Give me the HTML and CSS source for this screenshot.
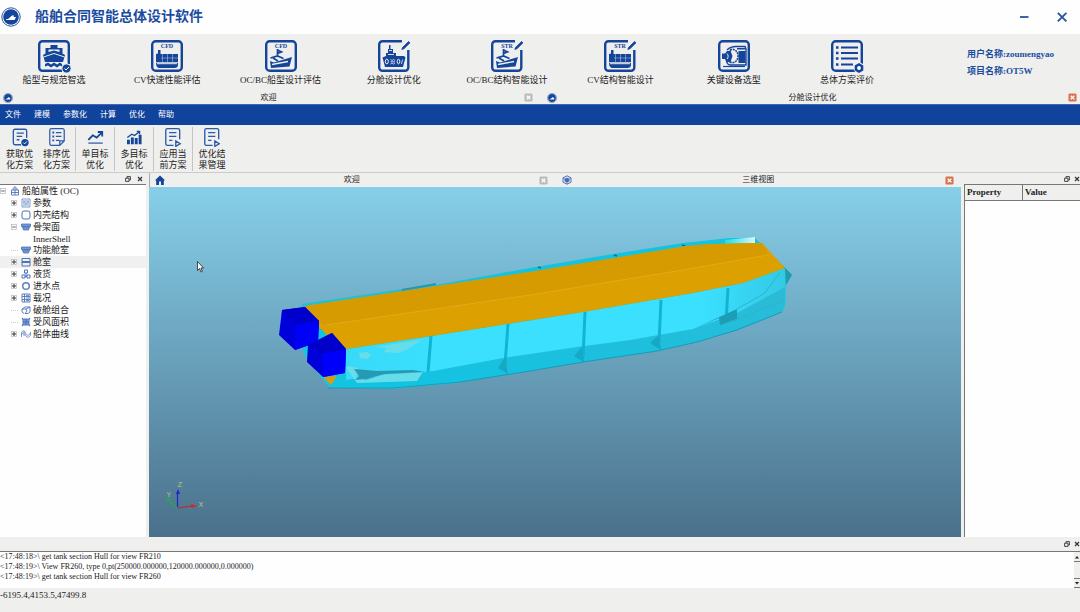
FILE: index.html
```html
<!DOCTYPE html>
<html lang="zh-CN">
<head>
<meta charset="utf-8">
<meta name="viewport" content="width=device-width, initial-scale=1">
<title>船舶合同智能总体设计软件</title>
<link rel="stylesheet" href="styles.css">
</head>
<body>
<svg class="defs" aria-hidden="true">
  <defs>
    <symbol id="logo" viewBox="0 0 20 20">
      <circle cx="10" cy="10" r="9.2" fill="#fff" stroke="#24549f" stroke-width="1"/>
      <circle cx="10" cy="10" r="7.8" fill="#14459a"/>
      <path d="M5 12h2l4-3.500h2l-.5 1.500h2.500l-1.500 3H5.500z" fill="#fff"/>
    </symbol>
    <symbol id="frame" viewBox="0 0 32 32">
      <rect x="1.200" y="1.200" width="29.600" height="29.600" rx="3.500" fill="none" stroke="#14459a" stroke-width="2.400"/>
    </symbol>
    <symbol id="frame-edit" viewBox="0 0 32 32">
      <path d="M24 1.200H4.500A3.300 3.300 0 0 0 1.200 4.500v23a3.300 3.300 0 0 0 3.300 3.300h22.500a3.300 3.300 0 0 0 3.300-3.300V10" fill="none" stroke="#14459a" stroke-width="2.400"/>
      <path d="M24.500 7.500L30.500 1.500l1.500 1.300-6 5.900-2.200.7z" fill="#14459a" stroke="#14459a" stroke-width=".8"/>
    </symbol>
    <symbol id="container-ship" viewBox="0 0 32 32">
      <path d="M5 23h22v2c0 2-1.500 3-3.500 3H8.500C6 28 5 25.500 5 23z" fill="#14459a"/>
      <path d="M5 22.300V14l2-.5V10h2.500v4H27v8.300z" fill="#14459a"/>
      <path d="M11.500 14v8M16.500 14v8M21.500 14v8M10 18h17" stroke="#efefee" stroke-width=".4"/>
      <path d="M6 23.700h20" stroke="#efefee" stroke-width="1"/>
    </symbol>
    <symbol id="bulk-ship" viewBox="0 0 32 32">
      <path d="M5 21l4 1.500 18-5.500-2.500 9.500L6 28z" fill="#14459a"/>
      <path d="M7 24.500l16-3" stroke="#efefee" stroke-width="1.300"/>
      <path d="M5.500 18l7-2 6 2.500M12.500 9v7M12.500 10l4 2-4 1.500M8 18l5 3" fill="none" stroke="#14459a" stroke-width="1.700"/>
    </symbol>
    <symbol id="close" viewBox="0 0 10 10">
      <rect x=".5" y=".5" width="9" height="9" rx="1.500" fill="currentColor"/>
      <path d="M3 3l4 4M7 3L3 7" stroke="#fff" stroke-width="1.400"/>
    </symbol>
    <symbol id="float" viewBox="0 0 6 6">
      <path d="M2 2V.6h3.400V4H4M.6 2.200H4v3.200H.6z" fill="none" stroke="#333" stroke-width=".9"/>
    </symbol>
    <symbol id="dismiss" viewBox="0 0 6 6">
      <path d="M1 1l4 4M5 1L1 5" stroke="#333" stroke-width="1.200"/>
    </symbol>
    <symbol id="plus" viewBox="0 0 6 6">
      <rect x=".5" y=".5" width="5" height="5" fill="#fff" stroke="#aaa" stroke-width=".6"/>
      <path d="M1 3h4M3 1v4" stroke="#333" stroke-width="1"/>
    </symbol>
    <symbol id="minus" viewBox="0 0 6 6">
      <rect x=".5" y=".5" width="5" height="5" fill="#fff" stroke="#aaa" stroke-width=".6"/>
      <path d="M1.200 3h3.600" stroke="#555" stroke-width=".9"/>
    </symbol>
    <symbol id="bulkhead" viewBox="0 0 10 10">
      <path d="M.5 2h9v2.500h-9zM1.500 5h7L7.500 8h-5z" fill="#7798d2" stroke="#3c66b4" stroke-width=".7"/>
    </symbol>
  </defs>
</svg>

<div class="app">
  <header class="titlebar">
    <svg class="titlebar-logo"><use href="#logo"/></svg>
    <h1 class="title">船舶合同智能总体设计软件</h1>
    <div class="window-controls">
      <button class="window-button" aria-label="最小化"><svg viewBox="0 0 12 12"><path d="M2 6h8.500" stroke="#24549f" stroke-width="1.800"/></svg></button>
      <button class="window-button" aria-label="关闭"><svg viewBox="0 0 12 12"><path d="M1.800 1.800l8.600 8.600M10.400 1.800l-8.600 8.600" stroke="#24549f" stroke-width="1.800"/></svg></button>
    </div>
  </header>

  <section class="ribbon">
    <nav class="modules">
      <button class="module">
        <svg viewBox="0 0 32 32">
          <path d="M24 30.800H4.500a3.300 3.300 0 0 1-3.300-3.300v-23a3.300 3.300 0 0 1 3.300-3.300h23a3.300 3.300 0 0 1 3.300 3.300V24" fill="none" stroke="#14459a" stroke-width="2.400"/>
          <path d="M12.500 5h7v3h5v5.500l2.500 1.500-2 7H7l-2-7 2.500-1.500V8h5z" fill="#14459a"/>
          <path d="M10.500 9.500h11v2.500L16 10.500 10.500 12z" fill="#efefee"/>
          <path d="M5.500 17L16 13.500 26.500 17" fill="none" stroke="#efefee" stroke-width="1"/>
          <path d="M7 24l3-1.500 3 2 3-2 3 2 3-2 2 1.500v2.500l-2-1-3 2-3-2-3 2-3-2-3 1z" fill="#14459a"/>
          <circle cx="28.500" cy="28.500" r="4.600" fill="#14459a" stroke="#efefee" stroke-width="1"/>
          <path d="M26.500 28.500l1.500 1.500 3-3" fill="none" stroke="#fff" stroke-width="1"/>
        </svg>
        <span>船型与规范智选</span>
      </button>
      <button class="module">
        <svg viewBox="0 0 32 32"><use href="#frame"/><use href="#container-ship"/><text class="badge" x="16" y="8">CFD</text></svg>
        <span>CV快速性能评估</span>
      </button>
      <button class="module">
        <svg viewBox="0 0 32 32"><use href="#frame"/><use href="#bulk-ship"/><text class="badge" x="16" y="8">CFD</text></svg>
        <span>OC/BC船型设计评估</span>
      </button>
      <button class="module">
        <svg viewBox="0 0 32 32">
          <use href="#frame-edit"/>
          <path d="M4.500 17.500L8 16v-3h2V9h1V5h1.500v4H15v4h3v3h8l1.500 1.500L25 27H7z" fill="#14459a"/>
          <path d="M11 10.500h3M10 14.500h6" stroke="#efefee" stroke-width=".9"/>
          <ellipse cx="8.800" cy="21.500" rx="1.500" ry="2.300" fill="none" stroke="#efefee" stroke-width="1"/>
          <ellipse cx="20.500" cy="21.500" rx="1.300" ry="2.300" fill="none" stroke="#efefee" stroke-width="1"/>
          <path d="M12.500 19.500l1.500 1 1.500-1 1.500 1M12.500 21.800h4.500M12.500 24l1.500-1 1.500 1 1.500-1M24.500 19.500l-1 4.500" fill="none" stroke="#efefee" stroke-width=".8"/>
        </svg>
        <span>分舱设计优化</span>
      </button>
      <button class="module">
        <svg viewBox="0 0 32 32"><use href="#frame-edit"/><use href="#bulk-ship"/><text class="badge" x="16" y="8">STR</text></svg>
        <span>OC/BC结构智能设计</span>
      </button>
      <button class="module">
        <svg viewBox="0 0 32 32"><use href="#frame-edit"/><use href="#container-ship"/><text class="badge" x="16" y="8">STR</text></svg>
        <span>CV结构智能设计</span>
      </button>
      <button class="module">
        <svg viewBox="0 0 32 32">
          <use href="#frame"/>
          <path d="M9 10c3-3 6-3.500 9-3.500h9l1 2.500v16H12c-3 0-4-4-4-9" fill="none" stroke="#14459a" stroke-width="1.400"/>
          <path d="M12 10c4-2 8 1 8 6s-4 8-8 6z" fill="#efefee" stroke="#14459a" stroke-width="1.600" stroke-dasharray="2 .8"/>
          <path d="M4 13.500h3l2-2.500h3.500l2 5-2 6H9l-2-3H4z" fill="#14459a"/>
          <path d="M9 13.500c1.500 1.500 1.500 4 0 5.500" fill="none" stroke="#efefee" stroke-width="1"/>
          <path d="M20.500 11h7v12h-7zM19 8h8v1.500h-8z" fill="#14459a"/>
          <path d="M5 26.500h22" stroke="#14459a" stroke-width="1.200"/>
        </svg>
        <span>关键设备选型</span>
      </button>
      <button class="module">
        <svg viewBox="0 0 32 32">
          <use href="#frame"/>
          <path d="M5 7.500h2.500M5 13h2.500M5 18.500h2.500M5 24.500h2.500" stroke="#14459a" stroke-width="2.500"/>
          <path d="M10 7.500h17M10 13h17M10 18.500h17M10 24.500h12" stroke="#14459a" stroke-width="1.900"/>
          <circle cx="28" cy="28" r="5.500" fill="#efefee"/>
          <path d="M28 23l4.300 2.500v5L28 33l-4.300-2.500v-5z" fill="#14459a"/>
          <circle cx="28" cy="28" r="1.900" fill="#fff"/>
        </svg>
        <span>总体方案评价</span>
      </button>
    </nav>
    <div class="account">
      <div>用户名称:zoumengyao</div>
      <div>项目名称:OT5W</div>
    </div>
  </section>

  <div class="tabs">
    <div class="tab">
      <svg class="tab-icon"><use href="#logo"/></svg>
      <span class="tab-label">欢迎</span>
      <button class="tab-close" aria-label="关闭欢迎"><svg><use href="#close"/></svg></button>
    </div>
    <div class="tab">
      <svg class="tab-icon"><use href="#logo"/></svg>
      <span class="tab-label">分舱设计优化</span>
      <button class="tab-close active" aria-label="关闭分舱设计优化"><svg><use href="#close"/></svg></button>
    </div>
  </div>

  <nav class="menubar">
    <button>文件</button><button>建模</button><button>参数化</button><button>计算</button><button>优化</button><button>帮助</button>
  </nav>

  <div class="toolbar">
    <button class="tool">
      <svg viewBox="0 0 18 18"><path d="M10 16H4.500a1.500 1.500 0 0 1-1.500-1.500v-11A1.500 1.500 0 0 1 4.500 2h9A1.500 1.500 0 0 1 15 3.500V10M6 5.500h6.500M6 8.500h5M6 11.500h2.500" fill="none" stroke="#2b58a8" stroke-width="1.200"/><circle cx="13.500" cy="14" r="3.300" fill="#14459a"/><path d="M12 14l1.200 1.200 2-2.200" fill="none" stroke="#fff" stroke-width=".8"/></svg>
      <span>获取优<br>化方案</span>
    </button>
    <button class="tool">
      <svg viewBox="0 0 18 18"><path d="M11.500 16.500H4A1.500 1.500 0 0 1 2.500 15V3A1.500 1.500 0 0 1 4 1.500h10A1.500 1.500 0 0 1 15.500 3v9.500zM11.500 16.500v-4h4M8 5h5M8 8.500h5M8 12h3" fill="none" stroke="#2b58a8" stroke-width="1.100"/><path d="M4.800 5h1.700M4.800 8.500h1.700M4.800 12h1.700" stroke="#2b58a8" stroke-width="1.700"/></svg>
      <span>排序优<br>化方案</span>
    </button>
    <button class="tool divided">
      <svg viewBox="0 0 18 18"><path d="M3 14.500h13" stroke="#5578b8" stroke-width="1.400"/><path d="M3 11.500L7 7.500l3.500 2L15 5M11.500 4.500h4v4" fill="none" stroke="#14459a" stroke-width="1.600"/></svg>
      <span>单目标<br>优化</span>
    </button>
    <button class="tool divided">
      <svg viewBox="0 0 18 18"><path d="M4 15.500v-4M7.500 15.500v-6M11 15.500V10M14.500 15.500V7" stroke="#14459a" stroke-width="2.600"/><path d="M3 9.500L7 6.500l2.500 1.200L14 4M11.500 4H14v2.500" fill="none" stroke="#14459a" stroke-width="1.200"/></svg>
      <span>多目标<br>优化</span>
    </button>
    <button class="tool divided">
      <svg viewBox="0 0 18 18"><path d="M9.500 16.500H4A1.500 1.500 0 0 1 2.500 15V3A1.500 1.500 0 0 1 4 1.500h9.500A1.500 1.500 0 0 1 15 3v8M5.500 5h6.500M5.500 8.500h6.500M5.500 12h3M11.500 12.500v5l4-2.500z" fill="none" stroke="#2b58a8" stroke-width="1.200"/></svg>
      <span>应用当<br>前方案</span>
    </button>
    <button class="tool divided">
      <svg viewBox="0 0 18 18"><path d="M9.500 16.500H4A1.500 1.500 0 0 1 2.500 15V3A1.500 1.500 0 0 1 4 1.500h9.500A1.500 1.500 0 0 1 15 3v8M5.500 5h6.500M5.500 8.500h6.500M5.500 12h3M11.500 12.500v5l4-2.500z" fill="none" stroke="#2b58a8" stroke-width="1.200"/></svg>
      <span>优化结<br>果管理</span>
    </button>
  </div>

  <main class="workspace">
    <aside class="tree-panel">
      <div class="dock-head">
        <button aria-label="浮动"><svg><use href="#float"/></svg></button>
        <button aria-label="关闭"><svg><use href="#dismiss"/></svg></button>
      </div>
      <ul class="tree">
        <li>
          <div class="row"><button class="toggle" aria-label="折叠"><svg><use href="#minus"/></svg></button><svg class="node-icon" viewBox="0 0 10 10"><path d="M1.500 4h7v5h-7zM3 4c0-4 4-4 4 0M1.500 6.500h7M5 1v8" fill="none" stroke="#4d74bb" stroke-width=".9"/></svg><span>船舶属性 (OC)</span></div>
          <ul class="branch">
            <li><div class="row"><button class="toggle" aria-label="展开"><svg><use href="#plus"/></svg></button><svg class="node-icon" viewBox="0 0 10 10"><path d="M1 1h8v8H1zM3 2v6M5 2v6M7 2v6M2.300 4h1.500M4.300 6h1.500M6.300 4h1.500" fill="none" stroke="#4d74bb" stroke-width=".7"/></svg><span>参数</span></div></li>
            <li><div class="row"><button class="toggle" aria-label="展开"><svg><use href="#plus"/></svg></button><svg class="node-icon" viewBox="0 0 10 10"><rect x="1" y="1" width="8" height="8" rx="2" fill="none" stroke="#4d74bb"/></svg><span>内壳结构</span></div></li>
            <li>
              <div class="row"><button class="toggle" aria-label="折叠"><svg><use href="#minus"/></svg></button><svg class="node-icon"><use href="#bulkhead"/></svg><span>骨架面</span></div>
              <ul class="leaves"><li><div class="row">InnerShell</div></li></ul>
            </li>
            <li><div class="row"><span class="twig"></span><svg class="node-icon"><use href="#bulkhead"/></svg><span>功能舱室</span></div></li>
            <li><div class="row hovered"><button class="toggle" aria-label="展开"><svg><use href="#plus"/></svg></button><svg class="node-icon" viewBox="0 0 10 10"><path d="M1 1.500h8v7.500H1zM1 4.500h8M1 5.500h8" fill="none" stroke="#4d74bb" stroke-width="1"/></svg><span>舱室</span></div></li>
            <li><div class="row"><button class="toggle" aria-label="展开"><svg><use href="#plus"/></svg></button><svg class="node-icon" viewBox="0 0 10 10"><path d="M3.500 1h3v3h-3zM1 6h3v3H1zM6 6h3v3H6zM5 4v3M4 7.500h2" fill="none" stroke="#4d74bb"/></svg><span>液货</span></div></li>
            <li><div class="row"><button class="toggle" aria-label="展开"><svg><use href="#plus"/></svg></button><svg class="node-icon" viewBox="0 0 10 10"><circle cx="5" cy="5" r="3.300" fill="none" stroke="#5b80c4" stroke-width="1.500"/></svg><span>进水点</span></div></li>
            <li><div class="row"><button class="toggle" aria-label="展开"><svg><use href="#plus"/></svg></button><svg class="node-icon" viewBox="0 0 10 10"><path d="M1 1h8v8H1zM1 3.500h8M1 6.500h8M3.500 1v8M5 2.300h3M5 5h3M5 7.700h3" fill="none" stroke="#4d74bb" stroke-width=".9"/></svg><span>载况</span></div></li>
            <li><div class="row"><span class="twig"></span><svg class="node-icon" viewBox="0 0 10 10"><path d="M1 4l3-2h5v5L7 8.500H4M1 4v3l2 1.500M1 4h4l1 2-2 2.500M9 2L5 4" fill="none" stroke="#4d74bb" stroke-width=".9"/></svg><span>破舱组合</span></div></li>
            <li><div class="row"><span class="twig"></span><svg class="node-icon" viewBox="0 0 10 10"><path d="M1 1l1.500 1h5L9 1 8 3v4l1 2-1.500-1h-5L1 9l1-2V3z" fill="#7798d2" stroke="#4d74bb" stroke-width=".9"/><path d="M2 5h6M5 2v6" stroke="#3c66b4" stroke-width=".7"/></svg><span>受风面积</span></div></li>
            <li><div class="row"><button class="toggle" aria-label="展开"><svg><use href="#plus"/></svg></button><svg class="node-icon" viewBox="0 0 10 10"><path d="M.5 8V4c1-3 3-3 4 0s3 3 5 0M.5 6c1-3 3-2 4 .5s4 2 5-.5V3M3 2v5" fill="none" stroke="#5b80c4" stroke-width=".8"/></svg><span>船体曲线</span></div></li>
          </ul>
        </li>
      </ul>
    </aside>

    <section class="viewer">
      <div class="view-tabs">
        <div class="tab">
          <svg class="tab-icon" viewBox="0 0 10 10"><path d="M0 5.200L5 .5l5 4.700-1.200.3V10H6V6.500H4V10H1.200V5.500z" fill="#14459a"/></svg>
          <span class="tab-label">欢迎</span>
          <button class="tab-close" aria-label="关闭欢迎"><svg><use href="#close"/></svg></button>
        </div>
        <div class="tab">
          <svg class="tab-icon" viewBox="0 0 10 10"><path d="M5 .8l4 2v4.400l-4 2-4-2V2.800z" fill="#dbe4f4" stroke="#4668b0" stroke-width=".9"/><path d="M5 2.800l2.400 1.100v2.400L5 7.400 2.600 6.300V3.900z" fill="#4668b0"/><path d="M1 2.800l4 2 4-2M5 4.800v4.400" fill="none" stroke="#4668b0" stroke-width=".6"/></svg>
          <span class="tab-label">三维视图</span>
          <button class="tab-close active" aria-label="关闭三维视图"><svg><use href="#close"/></svg></button>
        </div>
      </div>
      <div class="scene">
        <svg viewBox="149 187 812 350" role="img" aria-label="船体三维模型">
          <defs>
            <linearGradient id="bow" x1="0" x2="1"><stop offset="0" stop-color="#1bdcf2"/><stop offset="1" stop-color="#d8f7f6"/></linearGradient>
            <linearGradient id="side" gradientUnits="userSpaceOnUse" x1="345" x2="790" y1="0" y2="0"><stop offset="0" stop-color="#37d9f6"/><stop offset=".2" stop-color="#3be0ff"/><stop offset=".8" stop-color="#3be0ff"/><stop offset="1" stop-color="#32c8e4"/></linearGradient>
            <linearGradient id="bilge" gradientUnits="userSpaceOnUse" x1="0" x2="0" y1="300" y2="388"><stop offset="0" stop-color="#2bbbd7"/><stop offset="1" stop-color="#12c3e2"/></linearGradient>
          </defs>
          <path d="M302 305L436 285 530 268 613 254 683 243 730 238 755 238 792 275 786 285 785 305 782 312 737 330 697 342 657 351 583 362 530 371 460 382 393 388 330 387 303 350z" fill="#14c3df"/>
          <path d="M346 349L432 336 583 312 693 293 743 283 785 268 786 305 693 335 583 350 428 372 346 380z" fill="url(#side)"/>
          <path d="M428 372L503 358 577 347 630 340 693 329 737 313 785 287 785 305 782 312 737 330 697 342 657 351 583 362 530 371 460 382 393 388 330 387 346 380z" fill="url(#bilge)"/>
          <path d="M302 305L436 285" stroke="#24bfd2" stroke-width="2"/>
          <path d="M402 290L436 284" stroke="#2796b0" stroke-width="2"/>
          <path d="M725 240L755 237 755 243 725 244z" fill="url(#bow)"/>
          <path d="M755 238L792 275 785 269z" fill="#249bb0"/>
          <path d="M785 268L792 275 786 285z" fill="#2699ad"/>
          <path d="M538 267l3 1M614 255l3 1M682 245l3 1" stroke="#126c82" stroke-width="1.500"/>
          <path d="M305 306L530 272 687 246 712 244 762 243 785 268 743 283 693 293 583 312 507 324 432 336 346 349 330 338 318 326z" fill="#dca000"/>
          <path d="M305 306L530 272 687 246 712 244 762 243 768 255 683 270 530 295 326 325 318 322z" fill="#d69b00"/>
          <path d="M326 325L530 295 683 270 768 255" fill="none" stroke="#e8b428" stroke-width=".6"/>
          <path d="M431 336l-3 36M508 324l-3 41M585 312l-2 46M661 300l-2 43M728 288l-2 34" stroke="#11b4d2" stroke-width="3"/>
          <path d="M505 357l3 17-10-6M582 347l2 15-10-6M659 335l2 15-11-7" fill="#16a8c5"/>
          <path d="M693 329L737 309 737 320 720 325 719 318z" fill="#1d9eb7"/>
          <path d="M737 309L765 293 780 272M719 326L740 318 785 300" fill="none" stroke="#2cb4cd" stroke-width="1"/>
          <path d="M374 347l47-7-7 5-8 5-8 3-14-1 3-4zM359 353l8-1 4 3-3 4-8-1zM346 368l2-2 10 2-2 9 10 3 17-5 40-3-6 9-60 2z" fill="#67ddea"/>
          <path d="M354 369l23 2 36-1 12 2-40 2-20 5-10 1 4-4z" fill="#2799b2"/>
          <path d="M303 350L313 366 330 387 393 388 460 382" fill="none" stroke="#14c9e3" stroke-width="1.500"/>
          <path d="M328 388L393 388 460 382 530 371 583 362 657 351 697 342 737 330 782 312" fill="none" stroke="#0f8ea9" stroke-width=".7"/>
          <path d="M323 377L337 376 331 385z" fill="#dc9b10"/>
          <path d="M282 310L305 307 319 321 318 342 295 350 279 335z" fill="#0000dc"/>
          <path d="M282 310L305 307 319 321 296 325z" fill="#0000cc"/>
          <path d="M296 325L319 321 318 342 295 350z" fill="#0000f8"/>
          <path d="M308 345L332 333 346 349 345 373 323 377 307 362z" fill="#0000d8"/>
          <path d="M308 345L332 333 346 349 322 354z" fill="#0000ca"/>
          <path d="M322 354L346 349 345 373 323 377z" fill="#0000fa"/>
          <path d="M177.500 508V492" stroke="#1b25d0" stroke-width="1.200"/><path d="M176 494l2-5 2 5z" fill="#1b25d0"/>
          <path d="M178 508l14-2" stroke="#c8232b" stroke-width="1.200"/><path d="M191 504l6 2-5.500 2z" fill="#d8232b"/>
          <path d="M177.500 508l-8-7" stroke="#1fae45" stroke-width="1.300"/><path d="M166 498l5 1-3 3z" fill="#1fae45"/>
          <text class="axis" x="180" y="487">Z</text><text class="axis" x="169" y="497">Y</text><text class="axis" x="201" y="507">X</text>
          <path d="M197.500 261.500v9l2-2 1.500 3.500 1.400-.6-1.500-3.400h2.600z" fill="#fff" stroke="#222" stroke-width=".8"/>
        </svg>
      </div>
    </section>

    <aside class="props-panel">
      <div class="dock-head flush">
        <button aria-label="浮动"><svg><use href="#float"/></svg></button>
        <button aria-label="关闭"><svg><use href="#dismiss"/></svg></button>
      </div>
      <div class="props-body">
        <table class="props">
          <thead><tr><th scope="col">Property</th><th scope="col">Value</th></tr></thead>
        </table>
      </div>
    </aside>
  </main>

  <section class="log-panel">
    <div class="dock-head flush">
      <button aria-label="浮动"><svg><use href="#float"/></svg></button>
      <button aria-label="关闭"><svg><use href="#dismiss"/></svg></button>
    </div>
    <div class="log">
      <div class="log-lines">
        <div>&lt;17:48:18&gt;\ get tank section Hull for view FR210</div>
        <div>&lt;17:48:19&gt;\ View FR260, type 0,pt(250000.000000,120000.000000,0.000000)</div>
        <div>&lt;17:48:19&gt;\ get tank section Hull for view FR260</div>
      </div>
      <div class="scroller">
        <button aria-label="向上滚动"><svg viewBox="0 0 6 6"><path d="M1 4.500h4L3 2z" fill="#222"/></svg></button>
        <button aria-label="向下滚动"><svg viewBox="0 0 6 6"><path d="M1 2h4L3 4.500z" fill="#222"/></svg></button>
      </div>
    </div>
  </section>

  <footer class="status">-6195.4,4153.5,47499.8</footer>
</div>
</body>
</html>
```

FILE: styles.css
```css
* {
  box-sizing: border-box;
}

body {
  margin: 0;
  background: #efefee;
  color: #222;
  font: 9px/12px "Liberation Serif", "Noto Sans CJK SC", serif;
}

button {
  margin: 0;
  padding: 0;
  border: 0;
  background: none;
  color: inherit;
  font: inherit;
}

svg {
  display: block;
  flex: none;
}

ul {
  margin: 0;
  padding: 0;
  list-style: none;
}

.defs {
  position: absolute;
  width: 0;
  height: 0;
}

.app {
  display: flex;
  flex-direction: column;
  min-height: 100vh;
  overflow: hidden;
}

.titlebar {
  display: flex;
  align-items: center;
  height: 34px;
  padding: 0 12px 0 1px;
  background: #fefefe;
}

.titlebar-logo {
  width: 20px;
  height: 20px;
}

.title {
  flex: 1;
  margin: 0 0 0 14px;
  color: #1b4c9f;
  font-size: 14px;
  line-height: 20px;
}

.window-controls {
  display: flex;
  gap: 26px;
}

.window-button svg {
  width: 12px;
  height: 12px;
}

.ribbon {
  display: flex;
  height: 57px;
  padding: 6px 0 0 8px;
}

.modules {
  display: flex;
  flex: 1;
  justify-content: space-between;
}

.module {
  display: flex;
  flex-direction: column;
  align-items: center;
  gap: 2px;
  width: 92px;
  white-space: nowrap;
}

.module svg {
  width: 32px;
  height: 32px;
  overflow: visible;
}

.badge {
  fill: #14459a;
  font-size: 6px;
  font-weight: bold;
  text-anchor: middle;
}

.account {
  width: 187px;
  padding: 6px 0 0 74px;
  color: #1b4c9f;
  font-weight: bold;
  line-height: 17px;
  white-space: nowrap;
}

.tabs {
  display: grid;
  grid-template-columns: 1fr 1fr;
  gap: 14px;
  padding: 0 3px;
  border-bottom: 1px solid #3b6ab3;
}

.tab {
  display: flex;
  align-items: center;
  height: 13px;
  font-size: 8px;
}

.tab-icon {
  width: 10px;
  height: 10px;
}

.tab-label {
  flex: 1;
  text-align: center;
}

.tab-close {
  color: #bbb;
}

.tab-close.active {
  color: #d87350;
}

.tab-close svg {
  width: 9px;
  height: 9px;
}

.menubar {
  display: flex;
  gap: 13px;
  height: 20px;
  padding-left: 5px;
  background: #10439b;
  color: #fff;
  font-size: 8px;
}

.toolbar {
  display: flex;
  height: 48px;
  padding: 2px 0 1px 1px;
  border-bottom: 1px solid #ccc;
}

.tool {
  display: flex;
  flex-direction: column;
  align-items: center;
  gap: 2px;
  width: 37px;
  line-height: 11px;
}

.tool.divided {
  width: 39px;
  border-left: 1px solid #c4c4c4;
}

.tool svg {
  width: 20px;
  height: 20px;
}

.workspace {
  display: grid;
  grid-template-columns: 146px 1fr 116px;
  column-gap: 3px;
  flex: 1;
}

.tree-panel,
.viewer,
.props-panel {
  display: flex;
  flex-direction: column;
}

.tree-panel {
  background: #fefefe;
}

.dock-head {
  display: flex;
  justify-content: flex-end;
  align-items: center;
  gap: 6px;
  height: 12px;
  padding-right: 3px;
  border-bottom: 1px solid #777;
  background: #efefee;
}

.dock-head.flush {
  gap: 4px;
  padding-right: 0;
}

.dock-head svg {
  width: 6px;
  height: 6px;
}

.row {
  display: flex;
  align-items: center;
  height: 12px;
  white-space: nowrap;
}

.toggle {
  width: 10px;
}

.toggle svg {
  width: 6px;
  height: 6px;
}

.node-icon {
  width: 10px;
  height: 10px;
  margin-right: 2px;
}

.branch .row {
  padding-left: 11px;
}

.branch .leaves .row {
  height: 11px;
  padding-left: 33px;
}

.twig {
  width: 7px;
  margin-right: 3px;
  border-top: 1px dotted #ccc;
}

.row.hovered {
  background: #f0f0f0;
}

.view-tabs {
  display: grid;
  grid-template-columns: 1fr 1fr;
  gap: 14px;
  padding: 0 7px 0 5px;
  border-left: 1px solid #aaa;
}

.view-tabs .tab {
  height: 14px;
}

.scene {
  flex: 1;
  background: linear-gradient(#87cfe9, #4a708b);
}

.scene svg {
  width: 100%;
}

.axis {
  fill: #b9bd78;
  font: 8px "Liberation Mono", monospace;
  text-anchor: middle;
}

.props-body {
  flex: 1;
  border-left: 1px solid #777;
  background: #fefefe;
}

.props {
  width: 100%;
  border-collapse: collapse;
  table-layout: fixed;
}

.props th {
  height: 15px;
  padding: 0 2px;
  border-bottom: 1px solid #777;
  background: #efefee;
  text-align: left;
}

.props th + th {
  border-left: 1px solid #777;
}

.log-panel .dock-head {
  height: 15px;
}

.log {
  display: flex;
  justify-content: space-between;
  height: 36px;
  background: #fefefe;
  font-size: 8px;
  line-height: 10px;
}

.scroller {
  display: flex;
  flex-direction: column;
  justify-content: space-between;
  width: 6px;
  background: #efefee;
}

.scroller button {
  height: 10px;
  border-bottom: 1px solid #777;
}

.scroller button:last-child {
  border-top: 1px solid #777;
}

.scroller svg {
  width: 6px;
  height: 6px;
}

.status {
  height: 25px;
  padding-top: 1px;
}
```
